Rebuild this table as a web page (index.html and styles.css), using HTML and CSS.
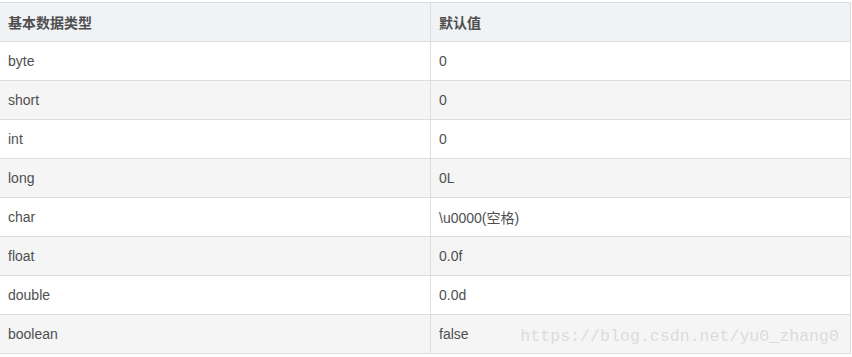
FILE: index.html
```html
<!DOCTYPE html>
<html>
<head>
<meta charset="utf-8">
<link rel="stylesheet" href="styles.css">
</head>
<body>
<div class="wrap">
<table class="tbl">
<thead>
<tr><th>基本数据类型</th><th>默认值</th></tr>
</thead>
<tbody>
<tr><td>byte</td><td>0</td></tr>
<tr><td>short</td><td>0</td></tr>
<tr><td>int</td><td>0</td></tr>
<tr><td>long</td><td>0L</td></tr>
<tr><td>char</td><td>\u0000(空格)</td></tr>
<tr><td>float</td><td>0.0f</td></tr>
<tr><td>double</td><td>0.0d</td></tr>
<tr><td>boolean</td><td>false</td></tr>
</tbody>
</table>
<div class="watermark">https://blog.csdn.net/yu0_zhang0</div>
</div>
</body>
</html>
```

FILE: styles.css
```css
html, body {
  margin: 0;
  padding: 0;
  background: #fff;
}
.wrap {
  position: relative;
  padding-top: 2px;
  margin-left: -1px;
  width: 852px;
}
.tbl {
  border-collapse: collapse;
  width: 852px;
  table-layout: fixed;
  font-family: "Liberation Sans", Arial, "Noto Sans CJK SC", sans-serif;
  font-size: 14px;
  color: #4f4f4f;
}
.tbl th, .tbl td {
  border: 1px solid #dddddd;
  height: 38px;
  padding: 0 0 0 8px;
  text-align: left;
  vertical-align: middle;
  box-sizing: border-box;
}
.tbl th {
  background: #eff3f5;
  font-weight: bold;
  color: #4f4f4f;
  height: 39px;
  font-family: "Noto Sans CJK SC", sans-serif;
  font-size: 14px;
}
.tbl th:first-child, .tbl td:first-child {
  width: 431px;
}
.tbl tbody tr {
  height: 39px;
}
.tbl tbody tr:nth-child(even) td {
  background: #f5f5f5;
}
.watermark {
  position: absolute;
  right: 12px;
  top: 325px;
  font-family: "Liberation Mono", "DejaVu Sans Mono", monospace;
  font-size: 16.6px;
  color: #dcdcdc;
  line-height: 24px;
  letter-spacing: 0;
}
```
